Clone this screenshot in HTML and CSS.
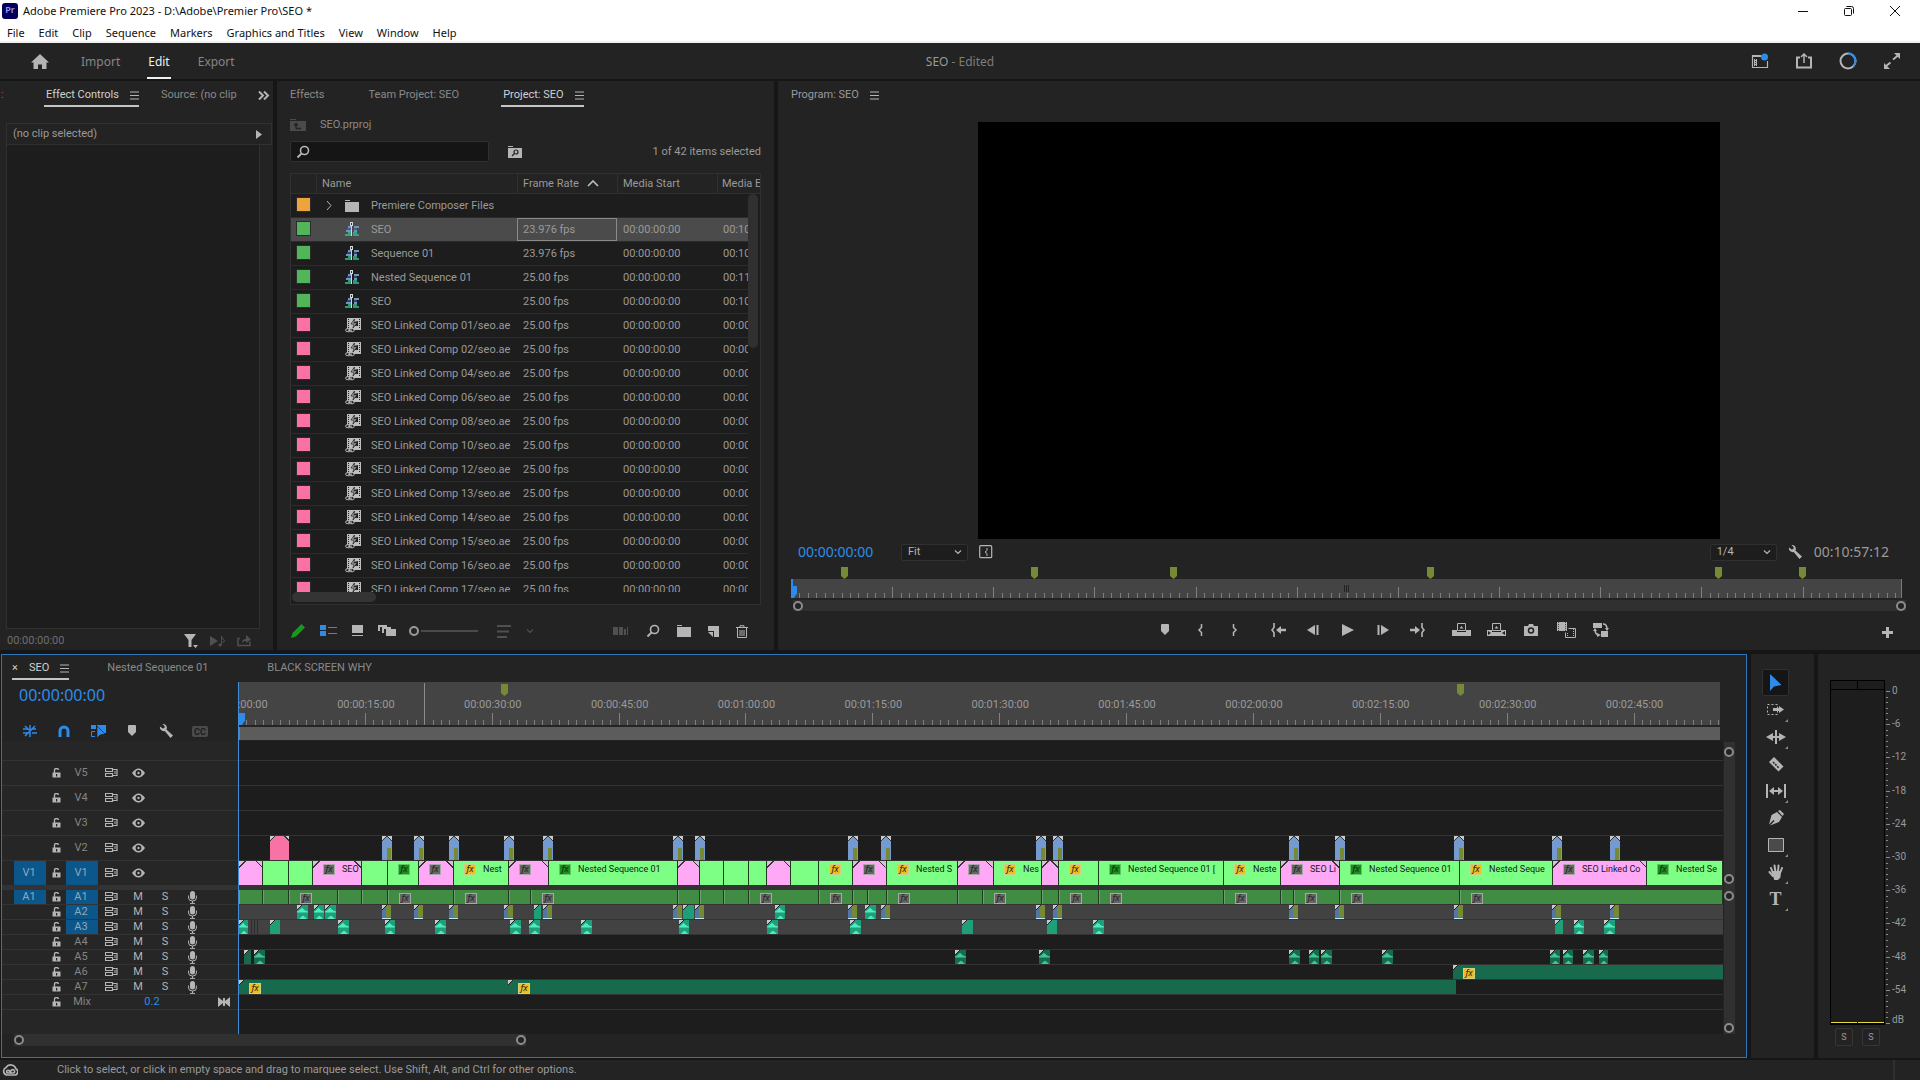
FILE: index.html
```html
<!doctype html>
<html lang="en">
<head>
  <meta charset="UTF-8">
  <meta name="viewport" content="width=device-width, initial-scale=1">
  <title>Adobe Premiere Pro 2023</title>
  <link rel="stylesheet" href="styles.css">
</head>
<body>
<svg class="sprite" aria-hidden="true">
  <symbol id="i-menu" viewBox="0 0 9 9"><path d="M0 1h9M0 4.500h9M0 8h9" stroke="currentColor"/></symbol>
  <symbol id="i-chevron" viewBox="0 0 8 8"><path d="M1 2.500l3 3 3-3" fill="none" stroke="currentColor" stroke-width="1.200"/></symbol>
  <symbol id="i-search" viewBox="0 0 14 14"><circle cx="8.500" cy="5.500" r="4" fill="none" stroke="currentColor" stroke-width="1.600"/><path d="M5.600 8.400L1.500 12.500" stroke="currentColor" stroke-width="2"/></symbol>
  <symbol id="i-folder" viewBox="0 0 14 12"><path d="M0 0h5v1H0zM0 2h14v10H0z" fill="currentColor"/></symbol>
  <symbol id="i-folder-up" viewBox="0 0 16 12"><path d="M0 0h6v1H0zM0 2h16v10H0z" fill="currentColor"/><path d="M6 9.500V5M4 6.500L6 4.500l2 2M6 9.500h5" fill="none" stroke="#232323" stroke-width="1.300"/></symbol>
  <symbol id="i-folder-search" viewBox="0 0 14 12"><path d="M0 0h5v1H0zM0 2h14v10H0z" fill="currentColor"/><circle cx="8" cy="6" r="2" fill="none" stroke="#232323" stroke-width="1.200"/><path d="M6.500 7.500L4 10" stroke="#232323" stroke-width="1.300"/></symbol>
  <symbol id="i-sequence" viewBox="0 0 15 15"><path d="M3 5h4M9 5h5M1 9h6M9 9h3" stroke="#6f94c4" stroke-width="2"/><path d="M2 7h5M9 7h3" stroke="#4f6fa0"/><path d="M0 13h6M8 13h6M3 11h4M8 11h4" stroke="#37c097" stroke-width="1.600"/><path d="M6 4h1v10H6z" fill="#d5d5d5"/><path d="M5 0h3v4H5z" fill="#d5d5d5"/><path d="M6 1h1v2H6z" fill="#333"/></symbol>
  <symbol id="i-comp" viewBox="0 0 17 15"><path d="M2 0h14v12H2z" fill="#bdbdbd"/><path d="M3.500 1v10M14.500 1v10" stroke="#222" stroke-dasharray="1 1"/><path d="M9 4l4-1v5H9z" fill="#222"/><path d="M9.500 1L6 6h3l-1 4 4-5H9z" fill="#bdbdbd" stroke="#222" stroke-width=".8"/><rect x=".7" y="10.700" width="5" height="3" rx="1.500" fill="#1d1d1d" stroke="#bdbdbd"/><rect x="4.200" y="10.700" width="5" height="3" rx="1.500" fill="#1d1d1d" stroke="#bdbdbd"/><path d="M3 12.200h4" stroke="#bdbdbd"/></symbol>
  <symbol id="i-wrench" viewBox="0 0 14 14"><path d="M3.500 0l2.200 2.200-.3 1.700-1.700.6L1 2.500A3.800 3.800 0 0 0 5.700 7l5.800 7 2.500-2.500-6.600-6A3.800 3.800 0 0 0 3.500 0z" fill="currentColor"/></symbol>
  <symbol id="i-marker" viewBox="0 0 10 12"><path d="M1 1q0-1 1-1h6q1 0 1 1v6l-4 4-4-4z" fill="currentColor"/></symbol>
  <symbol id="i-in" viewBox="0 0 6 14"><path d="M4.500 1v3.500L2 7l2.500 2.500V13" fill="none" stroke="currentColor" stroke-width="1.500"/></symbol>
  <symbol id="i-out" viewBox="0 0 6 14"><path d="M1.500 1v3.500L4 7 1.500 9.500V13" fill="none" stroke="currentColor" stroke-width="1.500"/></symbol>
  <symbol id="i-goto-in" viewBox="0 0 16 14"><path d="M4 0v4.500L2 7l2 2.500V14" fill="none" stroke="currentColor" stroke-width="1.600"/><path d="M6 7l5-4v2.800h5v2.400h-5V11z" fill="currentColor"/></symbol>
  <symbol id="i-goto-out" viewBox="0 0 16 14"><path d="M12 0v4.500L14 7l-2 2.500V14" fill="none" stroke="currentColor" stroke-width="1.600"/><path d="M10 7L5 3v2.800H0v2.400h5V11z" fill="currentColor"/></symbol>
  <symbol id="i-back" viewBox="0 0 14 12"><path d="M1 6l8-5v10zM10.500 1h2v10h-2z" fill="currentColor"/></symbol>
  <symbol id="i-step" viewBox="0 0 14 12"><path d="M13 6L5 1v10zM1.500 1h2v10h-2z" fill="currentColor"/></symbol>
  <symbol id="i-play" viewBox="0 0 12 12"><path d="M0 0l12 6-12 6z" fill="currentColor"/></symbol>
  <symbol id="i-lift" viewBox="0 0 19 14"><path d="M0 7h5v6H0zM5 9h9v4H5zM14 7h5v6h-5z" fill="currentColor"/><path d="M5.500 7.500v-7h8v7z" fill="none" stroke="currentColor"/><path d="M9.500 3l2 2.500h-4z" fill="currentColor"/></symbol>
  <symbol id="i-extract" viewBox="0 0 19 14"><path d="M0 7h5v6H0zM5 9h9v4H5zM14 7h5v6h-5z" fill="currentColor"/><path d="M5.500 7.500v-7h8v7z" fill="none" stroke="currentColor"/><path d="M9.500 3l2 2.500h-4z" fill="currentColor"/><path d="M1 8l3 2-3 2zM18 8l-3 2 3 2z" fill="#232323"/></symbol>
  <symbol id="i-camera" viewBox="0 0 14 12"><path d="M0 2h4l1-2h4l1 2h4v10H0z" fill="currentColor"/><circle cx="7" cy="6.500" r="2.500" fill="none" stroke="#232323" stroke-width="1.500"/></symbol>
  <symbol id="i-compare" viewBox="0 0 19 16"><path d="M0 0h10v9H0z" fill="currentColor"/><path d="M1.500 0v9M8.500 0v9" stroke="#444" stroke-dasharray="1 1"/><path d="M8.500 10.500v5h10v-9h-7" fill="none" stroke="currentColor"/><path d="M10.500 11v4M16.500 7v8" stroke="currentColor" stroke-dasharray="1 1"/></symbol>
  <symbol id="i-proxy" viewBox="0 0 16 14"><path d="M0 0h9v5H0zM8 8h7v6H8z" fill="currentColor"/><path d="M10 1q4 0 4 5M2 6q0 6 4 6" fill="none" stroke="currentColor" stroke-width="1.500"/><path d="M12 5h4l-2 3zM4 10l4 2-4 2zM0 8l2-3 2 3z" fill="currentColor"/></symbol>
  <symbol id="i-lock" viewBox="0 0 9 10"><path d="M.5 4.500h8v5h-8z" fill="currentColor"/><path d="M2.500 5V2q0-1.500 2-1.500t2 1.500" fill="none" stroke="currentColor" stroke-width="1.300"/><path d="M4 6h1.200v2.500H4z" fill="#222"/></symbol>
  <symbol id="i-sync" viewBox="0 0 13 10"><path d="M.5.500h7v3h-7zM.5 5.500h7v3h-7zM8 1.500h4v6H8" fill="none" stroke="currentColor" stroke-width="1.200"/><path d="M10 3v3" stroke="currentColor"/></symbol>
  <symbol id="i-eye" viewBox="0 0 13 10"><path d="M0 5q6.500-9 13 0-6.500 9-13 0z" fill="currentColor"/><circle cx="6.500" cy="5" r="2.900" fill="#222"/><circle cx="6.500" cy="5" r="1.200" fill="currentColor"/></symbol>
  <symbol id="i-mic" viewBox="0 0 9 13"><rect x="2" y="0" width="5" height="8.500" rx="2.500" fill="currentColor"/><path d="M.6 4.500V7q0 3 3.900 3t3.900-3V4.500M4.500 10v2M2 12.400h5" fill="none" stroke="currentColor"/></symbol>
  <symbol id="i-keys" viewBox="0 0 12 10"><path d="M0 0l5 4V1h2v3l5-4v10L7 6v3H5V6l-5 4z" fill="currentColor"/></symbol>
</svg>

<header class="window-bar">
  <div class="title-row">
    <span class="pr-logo">Pr</span>
    <span class="window-title">Adobe Premiere Pro 2023 - D:\Adobe\Premier Pro\SEO *</span>
    <div class="window-buttons">
      <button aria-label="Minimize"><svg width="10" height="10"><path d="M0 5.500h10" stroke="#111"/></svg></button>
      <button aria-label="Restore"><svg width="10" height="10" fill="none" stroke="#111"><rect x=".5" y="2.500" width="7" height="7" rx="1"/><path d="M2.500.500h5q2 0 2 2v5"/></svg></button>
      <button aria-label="Close"><svg width="10" height="10"><path d="M0 0l10 10M10 0L0 10" stroke="#111"/></svg></button>
    </div>
  </div>
  <nav class="menu-bar">
    <a href="#">File</a><a href="#">Edit</a><a href="#">Clip</a><a href="#">Sequence</a><a href="#">Markers</a><a href="#">Graphics and Titles</a><a href="#">View</a><a href="#">Window</a><a href="#">Help</a>
  </nav>
</header>

<div class="app-bar">
  <div class="modes">
    <button class="home" aria-label="Home"><svg width="18" height="15"><path d="M9 0l9 8.500h-2.500V15h-4.500v-4.500H7V15H2.500V8.500H0z" fill="#b5b5b5"/></svg></button>
    <button class="mode">Import</button>
    <button class="mode active">Edit</button>
    <button class="mode">Export</button>
  </div>
  <div class="doc-name"><b>SEO</b> - Edited</div>
  <div class="app-actions">
    <button aria-label="Workspaces"><svg width="18" height="16"><path d="M10 2.500H1.500v12h15V8" fill="none" stroke="#b5b5b5" stroke-width="1.200"/><path d="M1 2h9v2H1zM3 6h3v7H3z" fill="#b5b5b5"/><path d="M4.500 6v7" stroke="#333" stroke-dasharray="1 1"/><circle cx="13.500" cy="4" r="3.500" fill="#2d8ceb"/></svg></button>
    <button aria-label="Quick export"><svg width="18" height="16"><path d="M5 4.500H2v10h14v-10h-3" fill="none" stroke="#b5b5b5" stroke-width="2"/><path d="M9 10V2M6 4l3-3 3 3" fill="none" stroke="#b5b5b5" stroke-width="1.500"/></svg></button>
    <button aria-label="Progress"><svg width="18" height="18"><circle cx="9" cy="9" r="7.500" fill="none" stroke="#b5b5b5" stroke-width="2"/><path d="M9 1.500a7.500 7.500 0 0 1 5 13" fill="none" stroke="#2d8ceb" stroke-width="2"/></svg></button>
    <button aria-label="Full screen"><svg width="18" height="16"><path d="M10 6.500l5-4M2.500 13.500l5-4" stroke="#b5b5b5" stroke-width="2"/><path d="M11 0h6v6zM1 16v-6l6 6z" fill="#b5b5b5"/></svg></button>
  </div>
</div>

<main class="workspace">
  <div class="row-top">
    <section class="panel effect-controls">
      <div class="tabs">
        <span class="tab-cut">:</span>
        <button class="tab active">Effect Controls <svg class="menu-icon"><use href="#i-menu"/></svg></button>
        <button class="tab source-tab">Source: (no clip</button>
        <button class="more" aria-label="More panels"><svg width="12" height="9"><path d="M1 .5l4 4-4 4M6 .5l4 4-4 4" fill="none" stroke="#b5b5b5" stroke-width="2"/></svg></button>
      </div>
      <div class="fx-head"><span>(no clip selected)</span><svg width="6" height="9"><path d="M0 0l6 4.500L0 9z" fill="#b5b5b5"/></svg></div>
      <div class="fx-body"></div>
      <div class="fx-foot">
        <span>00:00:00:00</span>
        <button aria-label="Filter"><svg width="14" height="14"><path d="M0 0h12L7.500 6v7h-3V6zM9 11h5l-2.500 3z" fill="#b5b5b5"/></svg></button>
        <button aria-label="Play audio"><svg width="15" height="12"><path d="M0 1l8 5-8 5z" fill="#505050"/><circle cx="10" cy="10" r="1.500" fill="#505050"/><path d="M11.500 10V1q0 3 3 4l-1 3" fill="none" stroke="#505050"/></svg></button>
        <button aria-label="Export"><svg width="15" height="12"><path d="M3 3.500H1v7h12v-4" fill="none" stroke="#505050" stroke-width="1.500"/><path d="M5 8q0-4 4-4V0l5 4.500L9 8V6Q6 6 5 8z" fill="#505050"/></svg></button>
      </div>
    </section>

    <section class="panel project">
      <div class="tabs">
        <button class="tab">Effects</button>
        <button class="tab">Team Project: SEO</button>
        <button class="tab active">Project: SEO <svg class="menu-icon"><use href="#i-menu"/></svg></button>
      </div>
      <div class="project-path"><svg width="16" height="12"><use href="#i-folder-up"/></svg><span>SEO.prproj</span></div>
      <div class="project-search">
        <label class="search-box"><svg width="14" height="14"><use href="#i-search"/></svg><input type="text" aria-label="Search project"></label>
        <button aria-label="Create search bin"><svg width="14" height="12"><use href="#i-folder-search"/></svg></button>
        <span class="count">1 of 42 items selected</span>
      </div>
      <div class="bin">
        <table>
          <colgroup><col class="c-label"><col class="c-name"><col class="c-rate"><col class="c-start"><col class="c-end"></colgroup>
          <thead><tr><th></th><th>Name</th><th>Frame Rate <svg width="12" height="7"><path d="M1 6l5-5 5 5" fill="none" stroke="#c0c0c0" stroke-width="1.600"/></svg></th><th>Media Start</th><th>Media E</th></tr></thead>
          <tbody id="binRows"></tbody>
        </table>
        <div class="bin-vscroll"></div>
        <div class="bin-hscroll"></div>
      </div>
      <div class="project-tools">
        <button aria-label="Writable"><svg width="14" height="14"><path d="M0 14l1.500-5L9.500 1l1-1L14 3.500 5 12.500z" fill="#189a18"/></svg></button>
        <button aria-label="List view"><svg width="17" height="12"><path d="M0 0h6v5H0zM0 6h6v5H0zM8 2h9v1H8zM8 8h9v1H8z" fill="#2d8ceb"/></svg></button>
        <button aria-label="Icon view"><svg width="11" height="12"><path d="M0 0h11v8H0zM0 10h11v1H0z" fill="#b5b5b5"/></svg></button>
        <button aria-label="Freeform view"><svg width="19" height="12"><path d="M0 0h9v2H2v4H0zM4 2h9v2H6v4H4zM8 4h10v7H8z" fill="#b5b5b5"/></svg></button>
        <input class="zoom-slider" type="range" value="0" aria-label="Thumbnail size">
        <button aria-label="Sort"><svg width="14" height="13"><path d="M0 1h14M0 6.500h12M0 12h10" stroke="#505050" stroke-width="2"/></svg></button>
        <button aria-label="Sort options"><svg width="8" height="8" color="#505050"><use href="#i-chevron"/></svg></button>
        <div class="project-actions">
          <button aria-label="Automate to sequence"><svg width="16" height="8"><path d="M0 0h5v8H0zM6 0h4v8H6zM11 2h2v6h-2zM14 0h1v8h-1z" fill="#505050"/></svg></button>
          <button aria-label="Find"><svg width="14" height="14"><use href="#i-search"/></svg></button>
          <button aria-label="New bin"><svg width="14" height="12"><use href="#i-folder"/></svg></button>
          <button aria-label="New item"><svg width="11" height="11"><path d="M0 0h11v11H6V5H0z" fill="#b5b5b5"/><path d="M0 6h5v5z" fill="#b5b5b5"/></svg></button>
          <button aria-label="Clear"><svg width="12" height="13"><path d="M0 2.500h12M4 2V.7h4V2M1.500 3v9.500h9V3M4 5v6M6 5v6M8 5v6" fill="none" stroke="#b5b5b5"/></svg></button>
        </div>
      </div>
    </section>

    <section class="panel program">
      <div class="tabs">
        <span class="tab plain">Program: SEO <svg class="menu-icon"><use href="#i-menu"/></svg></span>
      </div>
      <div class="screen-wrap"><div class="screen"></div></div>
      <div class="program-info">
        <span class="timecode">00:00:00:00</span>
        <span class="select"><select aria-label="Zoom level"><option>Fit</option></select><svg width="8" height="8"><use href="#i-chevron"/></svg></span>
        <button aria-label="In point display"><svg width="14" height="14"><rect x=".7" y=".7" width="12" height="12" rx="1" fill="none" stroke="#b5b5b5" stroke-width="1.200"/><path d="M8 3v2.500L6 7l2 1.500V11" fill="none" stroke="#b5b5b5"/></svg></button>
        <span class="spacer"></span>
        <span class="select"><select aria-label="Playback resolution"><option>1/4</option></select><svg width="8" height="8"><use href="#i-chevron"/></svg></span>
        <button aria-label="Settings"><svg width="14" height="14"><use href="#i-wrench"/></svg></button>
        <span class="duration">00:10:57:12</span>
      </div>
      <div class="program-ruler" id="programRuler"></div>
      <div class="program-scroll"><i class="knob"></i><i class="knob"></i></div>
      <div class="transport">
        <span></span>
        <div class="transport-buttons">
          <button aria-label="Add marker"><svg width="10" height="12"><use href="#i-marker"/></svg></button>
          <button aria-label="Mark in"><svg width="6" height="14"><use href="#i-in"/></svg></button>
          <button aria-label="Mark out"><svg width="6" height="14"><use href="#i-out"/></svg></button>
          <button class="group-start" aria-label="Go to in"><svg width="16" height="14"><use href="#i-goto-in"/></svg></button>
          <button aria-label="Step back"><svg width="14" height="12"><use href="#i-back"/></svg></button>
          <button aria-label="Play"><svg width="12" height="12"><use href="#i-play"/></svg></button>
          <button aria-label="Step forward"><svg width="14" height="12"><use href="#i-step"/></svg></button>
          <button aria-label="Go to out"><svg width="16" height="14"><use href="#i-goto-out"/></svg></button>
          <button class="group-start" aria-label="Lift"><svg width="19" height="14"><use href="#i-lift"/></svg></button>
          <button aria-label="Extract"><svg width="19" height="14"><use href="#i-extract"/></svg></button>
          <button aria-label="Export frame"><svg width="14" height="12"><use href="#i-camera"/></svg></button>
          <button aria-label="Comparison view"><svg width="19" height="16"><use href="#i-compare"/></svg></button>
          <button aria-label="Toggle proxies"><svg width="16" height="14"><use href="#i-proxy"/></svg></button>
        </div>
        <button class="add-button" aria-label="Button editor"><svg width="11" height="11"><path d="M4 0h3v4h4v3H7v4H4V7H0V4h4z" fill="#b5b5b5"/></svg></button>
      </div>
    </section>
  </div>

  <div class="row-bottom">
    <section class="panel timeline">
      <div class="tabs">
        <button class="tab active"><i class="close-x">×</i> SEO <svg class="menu-icon"><use href="#i-menu"/></svg></button>
        <button class="tab">Nested Sequence 01</button>
        <button class="tab">BLACK SCREEN WHY</button>
      </div>
      <div class="timeline-main">
        <div class="timeline-work">
          <div class="timeline-top">
            <div class="timeline-controls">
              <span class="timecode big">00:00:00:00</span>
              <div class="timeline-tools">
                <button aria-label="Insert as nest"><svg width="14" height="14" stroke="#2d8ceb" stroke-width="1.500"><path d="M7 1v12M0 5h5M9 5h4M0 9h5M9 9h5M2 12l10-10M2 2l4 4"/></svg></button>
                <button aria-label="Snap"><svg width="12" height="12"><path d="M2 12V6a4 4 0 0 1 8 0v6" fill="none" stroke="#2d8ceb" stroke-width="3"/></svg></button>
                <button aria-label="Linked selection"><svg width="15" height="14"><path d="M0 1h5v4H0zM6 1h9v8H6z" fill="#2d8ceb"/><path d="M4 7.500H.5v5H4" fill="none" stroke="#2d8ceb"/><path d="M6 2v12l3-3 5-1z" fill="#2d8ceb" stroke="#232323" stroke-width=".7"/></svg></button>
                <button aria-label="Add marker"><svg width="10" height="12"><use href="#i-marker"/></svg></button>
                <button aria-label="Display settings"><svg width="14" height="14"><use href="#i-wrench"/></svg></button>
                <button class="cc" aria-label="Captions">CC</button>
              </div>
            </div>
            <div class="ruler-col">
              <div class="ruler" id="ruler"></div>
              <div class="work-area"></div>
            </div>
          </div>
          <div class="tracks" id="tracks"></div>
          <div class="playhead"></div>
        </div>
        <div class="vscrolls">
          <div class="vscroll video"><i class="knob"></i><i class="knob"></i></div>
          <div class="vscroll"><i class="knob"></i><i class="knob"></i></div>
        </div>
      </div>
      <div class="timeline-hscroll"><i class="knob"></i><i class="knob"></i></div>
    </section>

    <section class="panel tools">
      <button class="tool active" aria-label="Selection"><svg width="14" height="18"><path d="M1 0v17l4-4.500 7.500-1.500z" fill="#2d8ceb"/></svg></button>
      <button class="tool more-tools" aria-label="Track select"><svg width="18" height="12"><path d="M.5.500h10v10H.5z" fill="none" stroke="#b5b5b5" stroke-dasharray="2 2"/><path d="M6 4h6V2l5 3.500L12 9V7H6z" fill="#b5b5b5"/></svg></button>
      <button class="tool more-tools" aria-label="Ripple edit"><svg width="20" height="14"><path d="M0 7l7-4v3h2V0h2v6h2V3l7 4-7 4V8h-2v6H9V8H7v3z" fill="#b5b5b5"/></svg></button>
      <button class="tool" aria-label="Razor"><svg width="16" height="16"><path d="M6 1l9.500 9.500-5 5L1 6z" fill="#b5b5b5"/><path d="M5 6l6 6" stroke="#232323" stroke-width="1.500" stroke-dasharray="2 1"/></svg></button>
      <button class="tool more-tools" aria-label="Slip"><svg width="20" height="14"><path d="M0 0h2v14H0zM18 0h2v14h-2zM3 7l5-4v3h4V3l5 4-5 4V8H8v3z" fill="#b5b5b5"/></svg></button>
      <button class="tool" aria-label="Pen"><svg width="16" height="16"><path d="M10 1l2-1 4 4-1.500 2zM9 2l5 5-3 5-9 3.500 4.500-4.500-1-1L1 14.500 3.500 5z" fill="#b5b5b5"/></svg></button>
      <button class="tool more-tools" aria-label="Rectangle"><svg width="16" height="14"><path d="M.5.500h15v13H.5z" fill="#4a4a4a" stroke="#b5b5b5"/></svg></button>
      <button class="tool more-tools" aria-label="Hand"><svg width="16" height="16" stroke="#b5b5b5" stroke-linecap="round" stroke-width="2"><path d="M5 9L3 4M7.500 8L6.500 1.500M10 8l.5-6.500M12 9l2-5M5 12L1.500 8"/><path d="M5 8h7l-.5 5-2 2H7z" fill="#b5b5b5"/></svg></button>
      <button class="tool more-tools type-tool" aria-label="Type">T</button>
    </section>

    <section class="panel meters">
      <div class="meter-row">
        <div class="meter">
          <div class="clip-lights"><i></i><i></i></div>
          <div class="bars"><i></i><i></i></div>
        </div>
        <div class="meter-scale" id="meterScale"></div>
      </div>
      <div class="solo"><button>S</button><button>S</button></div>
    </section>
  </div>
</main>

<footer class="status">
  <svg width="16" height="14" fill="none" stroke="#b5b5b5" stroke-width="1.600"><path d="M4.500 12a4 4 0 0 1-.5-7.500A5.500 5.500 0 0 1 14 6a3.200 3.200 0 0 1-2 6z"/><path d="M9 9.500Q7 7 5.500 7.500T5 10h6q2 0 1.500-2T9.500 7L8 9"/></svg>
  <span class="status-text">Click to select, or click in empty space and drag to marquee select. Use Shift, Alt, and Ctrl for other options.</span>
  <span class="status-end"></span>
</footer>
<script src="app.js"></script>
</body>
</html>
```
FILE: styles.css
```css
:root {
  --bg: #232323;
  --dark: #1d1d1d;
  --gap: #161616;
  --line: #303030;
  --text: #9a9a9a;
  --bright: #d0d0d0;
  --icon: #b5b5b5;
  --blue: #2d8ceb;
  --olive: #768a36;
}
* {
  box-sizing: border-box;
}
body {
  margin: 0;
  height: 100vh;
  display: flex;
  flex-direction: column;
  overflow: hidden;
  background: var(--gap);
  color: var(--text);
  font: 11px/14px Roboto, "Noto Sans", sans-serif;
}
button {
  display: inline-flex;
  align-items: center;
  justify-content: center;
  padding: 0;
  border: 0;
  background: none;
  color: inherit;
  font: inherit;
  white-space: nowrap;
}
svg {
  display: block;
  flex: none;
}
i {
  font-style: normal;
}
.sprite {
  position: absolute;
  width: 0;
  height: 0;
}
.spacer {
  flex: 1;
}

/* window chrome */
.window-bar {
  background: #fff;
  color: #111;
  border-bottom: 2px solid #f0f0f0;
  font-family: "Noto Sans", sans-serif;
}
.title-row {
  display: flex;
  align-items: center;
  height: 22px;
  padding-left: 2px;
}
.pr-logo {
  width: 16px;
  height: 16px;
  border-radius: 3px;
  background: #00005b;
  color: #9999ff;
  font-size: 9px;
  font-weight: 600;
  text-align: center;
}
.window-title {
  margin-left: 5px;
}
.window-buttons {
  display: flex;
  gap: 36px;
  margin-left: auto;
  padding-right: 20px;
}
.menu-bar {
  display: flex;
  gap: 14px;
  height: 19px;
  padding: 4px 7px 0;
}
.menu-bar a {
  color: inherit;
  text-decoration: none;
}

/* app bar */
.app-bar {
  display: grid;
  grid-template-columns: 1fr auto 1fr;
  align-items: center;
  height: 36px;
  background: var(--bg);
  font: 12px/16px "Noto Sans", sans-serif;
}
.modes {
  display: flex;
  align-self: stretch;
  gap: 26px;
  padding-left: 31px;
}
.home {
  margin-right: 5px;
}
.mode {
  padding: 3px 1px 0;
  border-bottom: 2px solid transparent;
  color: #868686;
}
.mode.active {
  color: #f0f0f0;
  border-color: #f0f0f0;
}
.doc-name {
  padding-top: 2px;
  color: #7d7d7d;
}
.doc-name b {
  color: var(--text);
  font-weight: 400;
}
.app-actions {
  display: flex;
  gap: 26px;
  justify-content: flex-end;
  padding-right: 19px;
}

/* panels */
.workspace {
  flex: 1;
  min-height: 0;
  display: grid;
  grid-template-rows: minmax(0, 569fr) minmax(0, 404fr);
  gap: 4px;
  padding: 2px 0;
}
.row-top {
  display: grid;
  grid-template-columns: 273px 497px minmax(0, 1fr);
  gap: 4px;
  min-height: 0;
}
.row-bottom {
  display: grid;
  grid-template-columns: minmax(0, 1fr) 63px 102px;
  gap: 4px;
  min-height: 0;
  padding-left: 1px;
}
.panel {
  display: flex;
  flex-direction: column;
  min-width: 0;
  min-height: 0;
  background: var(--bg);
}
.tabs {
  display: flex;
  align-items: flex-start;
  height: 41px;
  padding-top: 4px;
}
.tab {
  display: inline-flex;
  align-items: center;
  height: 22px;
  padding: 0 2px;
  border-bottom: 2px solid transparent;
  color: #8a8a8a;
}
.tab.active {
  color: var(--bright);
  border-color: #c4c4c4;
}
.tab.active .menu-icon {
  margin-right: -2px;
}
.menu-icon {
  width: 9px;
  height: 9px;
  margin-left: 11px;
  color: var(--icon);
}

/* effect controls */
.effect-controls .tabs {
  height: 42px;
}
.tab-cut {
  width: 44px;
  padding: 3px 0 0 1px;
  color: #a05050;
}
.source-tab {
  margin-left: 20px;
}
.more {
  height: 18px;
  margin: 1px 3px 0 auto;
}
.fx-head {
  display: flex;
  align-items: center;
  justify-content: space-between;
  height: 22px;
  margin: 0 1px 0 6px;
  padding: 0 9px 0 6px;
  border: 1px solid var(--line);
}
.fx-body {
  flex: 1;
  margin: 0 13px 0 6px;
  border: 1px solid var(--line);
  border-top: 0;
  background: var(--dark);
}
.fx-foot {
  display: flex;
  align-items: center;
  gap: 12px;
  height: 21px;
  padding: 2px 21px 0 7px;
  color: #6e6e6e;
}
.fx-foot span {
  margin-right: auto;
}

/* project */
.project {
  padding: 0 13px;
}
.project .tabs {
  gap: 40px;
  height: 35px;
}
.project .tab:first-child {
  padding-left: 0;
}
.project-path {
  display: flex;
  align-items: center;
  gap: 14px;
  height: 18px;
  margin-bottom: 7px;
  color: #8a8a8a;
}
.project-path svg {
  color: #4a4a4a;
}
.project-search {
  display: flex;
  align-items: center;
  height: 21px;
  margin-bottom: 11px;
}
.search-box {
  display: flex;
  align-items: center;
  width: 199px;
  height: 21px;
  margin-right: 19px;
  padding: 0 5px;
  border: 1px solid var(--line);
  border-radius: 2px;
  background: #151515;
}
.search-box input {
  flex: 1;
  min-width: 0;
  border: 0;
  background: none;
  color: var(--bright);
}
.search-box svg,
.project-search button,
.project-tools {
  color: var(--icon);
}
.count {
  margin-left: auto;
}
.bin {
  position: relative;
  flex: 1;
  min-height: 0;
  overflow: hidden;
  border: 1px solid var(--line);
  background: var(--dark);
}
.bin table {
  width: 100%;
  border-collapse: separate;
  border-spacing: 0;
  table-layout: fixed;
}
.c-label { width: 25px; }
.c-name { width: 201px; }
.c-rate { width: 100px; }
.c-start { width: 100px; }
.bin th {
  height: 20px;
  padding: 0 0 0 5px;
  border-left: 1px solid var(--line);
  border-bottom: 1px solid var(--line);
  background: var(--bg);
  font-weight: 400;
  text-align: left;
  white-space: nowrap;
  overflow: hidden;
}
.bin th:last-child {
  padding-left: 4px;
}
.bin th:first-child {
  border-left: 0;
}
.bin th svg {
  display: inline-block;
  margin-left: 5px;
}
.bin td {
  height: 24px;
  padding: 0 0 0 6px;
  border-bottom: 1px solid #2b2b2b;
  white-space: nowrap;
  overflow: hidden;
}
.bin td:nth-child(2) {
  padding: 0;
}
.bin td:first-child {
  padding: 0 0 2px 5px;
}
.bin tr.selected td {
  background: #4b4b4b;
}
.bin tr.selected td:nth-child(3) {
  box-shadow: inset 0 0 0 1px #8a8a8a;
}
.swatch {
  display: block;
  width: 15px;
  height: 15px;
  border: 1px solid #2b2b2b;
}
.swatch.orange { background: #eda43c; }
.swatch.green { background: #52b558; }
.swatch.pink { background: #f972a6; }
.item-name {
  display: grid;
  grid-template-columns: 29px 26px auto;
  align-items: center;
}
.item-name .twirl {
  margin-left: 11px;
}
.bin-vscroll {
  position: absolute;
  top: 20px;
  right: 0;
  bottom: 0;
  width: 12px;
  background: var(--dark);
}
.bin-vscroll::before {
  content: "";
  display: block;
  width: 10px;
  height: 154px;
  border-radius: 5px;
  background: var(--line);
}
.bin-hscroll {
  position: absolute;
  left: 0;
  right: 0;
  bottom: 0;
  height: 12px;
  background: var(--dark);
}
.bin-hscroll::before {
  content: "";
  display: block;
  width: 84px;
  height: 10px;
  margin-left: 1px;
  border-radius: 5px;
  background: #343434;
}
.project-tools {
  display: flex;
  align-items: center;
  gap: 15px;
  height: 45px;
  padding: 7px 13px 0 1px;
}
.project-actions {
  display: flex;
  align-items: center;
  gap: 17px;
  margin-left: auto;
}
.zoom-slider {
  appearance: none;
  width: 69px;
  height: 10px;
  margin: 0 4px 0 -3px;
  background: linear-gradient(#4a4a4a, #4a4a4a) right / 57px 2px no-repeat;
}
.zoom-slider::-webkit-slider-thumb {
  appearance: none;
  width: 10px;
  height: 10px;
  border: 2px solid #9a9a9a;
  border-radius: 50%;
  background: var(--bg);
}

/* program monitor */
.program .tabs {
  padding-left: 11px;
}
.tab.plain {
  color: var(--text);
}
.screen-wrap {
  flex: 1;
  min-height: 0;
  display: flex;
  justify-content: center;
}
.screen {
  height: 100%;
  aspect-ratio: 16 / 9;
  background: #000;
}
.program-info {
  display: flex;
  align-items: center;
  height: 28px;
  padding: 0 31px 2px 20px;
}
.timecode {
  width: 103px;
  color: var(--blue);
  font-family: "Noto Sans", sans-serif;
  font-size: 14px;
}
.timecode.big {
  width: auto;
  font-size: 16px;
  line-height: 20px;
}
.select {
  display: flex;
  align-items: center;
  margin-right: 11px;
  color: var(--icon);
}
.select select {
  appearance: none;
  width: 67px;
  height: 17px;
  padding: 0 6px;
  border: 1px solid var(--line);
  border-radius: 2px;
  background: var(--dark);
  color: inherit;
  font: inherit;
}
.select svg {
  margin-left: -14px;
  margin-right: 6px;
  pointer-events: none;
}
.duration {
  margin-left: 12px;
  font-family: "Noto Sans", sans-serif;
  font-size: 14px;
}
.program-info button {
  color: var(--icon);
}
.program-ruler {
  position: relative;
  height: 19px;
  margin: 12px 18px 2px 13px;
  border-left: 2px solid var(--blue);
  border-right: 1px solid var(--blue);
  background: #444;
}
.tick {
  position: absolute;
  bottom: 0;
  width: 1px;
  height: 5px;
  background: #808080;
}
.tick.major {
  height: 11px;
}
.mark {
  position: absolute;
  width: 7px;
  height: 12px;
  margin-left: -3px;
  background: var(--olive);
  clip-path: polygon(0 0, 100% 0, 100% 75%, 50% 100%, 0 75%);
}
.program-ruler .mark {
  top: -12px;
}
.head-grip {
  position: absolute;
  left: -2px;
  bottom: 0;
  width: 6px;
  height: 12px;
  background: var(--blue);
  clip-path: polygon(0 0, 100% 0, 100% 60%, 50% 100%, 0 100%);
}
.grip {
  position: absolute;
  left: 50%;
  top: 6px;
  width: 5px;
  height: 7px;
  margin-left: -3px;
  background: repeating-linear-gradient(90deg, #222 0 1px, transparent 1px 2px);
}
.program-scroll {
  display: flex;
  justify-content: space-between;
  align-items: center;
  height: 11px;
  margin: 0 14px 0 15px;
  background: var(--line);
}
.knob {
  width: 10px;
  height: 10px;
  border: 2px solid #8c8c8c;
  border-radius: 50%;
  background: var(--bg);
}
.transport {
  display: grid;
  grid-template-columns: 1fr auto 1fr;
  align-items: center;
  height: 39px;
  padding-bottom: 2px;
  color: var(--icon);
}
.transport-buttons {
  display: flex;
  padding-left: 68px;
}
.transport-buttons button {
  width: 35px;
}
.transport-buttons .group-start {
  margin-left: 8px;
}
.add-button {
  justify-self: end;
  margin: 5px 27px 0 0;
}

/* timeline */
.timeline {
  border: 1px solid #2f76b8;
}
.timeline .tabs {
  height: 27px;
  padding: 3px 0 0 10px;
}
.timeline .tab {
  margin-right: 55px;
}
.timeline .tab:first-child {
  margin-right: 36px;
  padding-left: 0;
}
.close-x {
  width: 17px;
  text-align: left;
}
.timeline-main {
  flex: 1;
  min-height: 0;
  display: grid;
  grid-template-columns: minmax(0, 1fr) 23px;
}
.timeline-work {
  position: relative;
  display: flex;
  flex-direction: column;
  overflow: hidden;
  background: var(--dark);
}
.timeline-top {
  display: flex;
  height: 59px;
  background: var(--bg);
}
.timeline-controls {
  width: 237px;
  padding: 3px 0 0 17px;
}
.timeline-tools {
  display: flex;
  margin: 18px 0 0 -6px;
  color: var(--icon);
}
.timeline-tools button {
  width: 34px;
  height: 16px;
}
.timeline-tools .cc {
  width: 16px;
  height: 11px;
  margin: 3px 9px 0;
  border-radius: 2px;
  background: #4a4a4a;
  color: #1d1d1d;
  font-size: 9px;
  font-weight: 700;
}
.ruler-col {
  flex: 1;
  min-width: 0;
  margin-right: 3px;
}
.ruler {
  position: relative;
  height: 43px;
  margin-bottom: 2px;
  overflow: hidden;
  background: #444;
}
.ruler .tick.major {
  height: 12px;
}
.ruler .head-grip {
  left: 0;
}
.ruler-label {
  position: absolute;
  top: 16px;
  width: 80px;
  margin-left: -40px;
  text-align: center;
}
.ruler .mark {
  top: 2px;
}
.hover-line {
  position: absolute;
  top: 1px;
  bottom: 1px;
  width: 1px;
  background: #8c8c8c;
}
.work-area {
  height: 13px;
  background: #5c5c5c;
  border-left: 1px solid var(--blue);
}
.tracks {
  flex: 1;
  padding-top: 19px;
  background: linear-gradient(90deg, #262626 237px, var(--dark) 237px);
}
.track {
  display: flex;
  height: 15px;
  border-bottom: 1px solid #333;
}
.track.video {
  height: 25px;
  border-top: 1px solid #333;
  border-bottom: 0;
}
.track.first-audio {
  height: 20px;
  border-top: 5px solid #333;
}
.track-head {
  display: grid;
  grid-template-columns: 32px 20px 32px 27px 26px 28px 26px 1fr;
  align-items: center;
  justify-items: center;
  width: 237px;
  padding-left: 12px;
  color: var(--icon);
}
.patch {
  align-self: stretch;
  justify-self: stretch;
  padding-right: 2px;
  color: #858585;
}
.patch.on {
  background: #0b568a;
  color: #8fa9bb;
}
.mix-name {
  color: #858585;
}
.mix-value {
  grid-column: 5 / span 2;
  color: var(--blue);
}
.mix-keys {
  grid-column: 8;
  justify-self: end;
  margin-right: 9px;
}
.lane {
  position: relative;
  flex: 1;
  min-width: 0;
  overflow: hidden;
}
.lane.targeted {
  background: #424242;
}
.clip {
  position: absolute;
  top: 0;
  bottom: 0;
  overflow: hidden;
  border-right: 1px solid #1f3a1f;
  white-space: nowrap;
}
.clip.nest { background: #7dff85; }
.clip.comp {
  background: linear-gradient(135deg, #d8bfd5 4px, #333 4px 5px, transparent 5px) left / 50% 100% no-repeat,
    linear-gradient(225deg, #d8bfd5 4px, #333 4px 5px, transparent 5px) right / 50% 100% no-repeat,
    #fea8f6;
}
.clip.linked {
  border-right: 0;
  background: linear-gradient(135deg, #c9c9c9 3px, #333 3px 4px, transparent 4px) left / 50% 100% no-repeat,
    linear-gradient(225deg, #c9c9c9 3px, #333 3px 4px, transparent 4px) right / 50% 100% no-repeat,
    #f972a6;
}
.clip.title {
  border-right: 0;
  background: linear-gradient(135deg, #c9c9c9 3px, #333 3px 4px, transparent 4px) left / 50% 100% no-repeat,
    linear-gradient(225deg, #c9c9c9 3px, #333 3px 4px, transparent 4px) right / 50% 100% no-repeat,
    linear-gradient(var(--olive), var(--olive)) 5px 100% / 4px 12px no-repeat,
    #759ad0;
}
.clip.nest-audio {
  background: #3f8c42;
  border-left: 1px solid #6f9f70;
}
.clip.music,
.clip.sfx,
.clip.sfx-dark {
  border-right: 0;
  background: linear-gradient(135deg, #c9c9c9 3px, #222 3px 4px, transparent 4px), #176b4c;
}
.clip.sfx {
  background: linear-gradient(135deg, #c9c9c9 3px, #222 3px 4px, transparent 4px), #1f9f77;
}
.clip.title-audio {
  border-right: 0;
  border-bottom: 1px solid #bfe4ff;
  background: linear-gradient(135deg, #c9c9c9 3px, #222 3px 4px, transparent 4px),
    linear-gradient(var(--olive), var(--olive)) 4px 0 / 5px 12px no-repeat,
    #5277a5;
}
.clip.sliver {
  border-right: 0;
  background: #2c2c2c;
}
.clip svg {
  width: 100%;
  height: 100%;
}
.wave { fill: #4fecc4; }
.sfx-dark .wave { fill: #3cc795; }
.clip-name {
  position: absolute;
  left: 29px;
  top: 2px;
  color: #142014;
  font-size: 9px;
  line-height: 13px;
}
.fx {
  position: absolute;
  left: 10px;
  top: 3px;
  width: 12px;
  height: 11px;
  border: 1px solid #a8a8a8;
  background: #666;
  color: #222;
  font: italic 9px/8px "Noto Sans", sans-serif;
  text-align: center;
}
.fx.green { background: #1a8f1a; border-color: #5fc763; }
.fx.yellow { background: #efc01d; border-color: #cfcf8a; }
.playhead {
  position: absolute;
  top: 0;
  bottom: 0;
  left: 236px;
  width: 1px;
  background: #3d8ed4;
}
.vscrolls {
  display: flex;
  flex-direction: column;
  padding: 60px 0 0 1px;
}
.vscroll {
  flex: 1;
  display: flex;
  flex-direction: column;
  justify-content: space-between;
  width: 11px;
  padding: 3px 0 1px;
  background: var(--line);
}
.vscroll.video {
  flex: none;
  height: 146px;
  padding: 5px 0 4px;
}
.timeline-hscroll {
  display: flex;
  justify-content: space-between;
  align-items: center;
  width: 512px;
  height: 12px;
  margin: 0 0 11px 12px;
  background: var(--line);
}

/* tools */
.tools {
  align-items: center;
  padding: 15px 14px 0 0;
}
.tool {
  position: relative;
  width: 27px;
  height: 27px;
}
.tool.active {
  border: 1px solid var(--line);
  border-radius: 2px;
  background: #151515;
}
.more-tools::after {
  content: "";
  position: absolute;
  right: 1px;
  bottom: 1px;
  width: 3px;
  height: 3px;
  background: #8a8a8a;
  clip-path: polygon(100% 0, 100% 100%, 0 100%);
}
.type-tool {
  color: var(--icon);
  font: 700 18px/20px "Liberation Serif", serif;
}

/* audio meters */
.meters {
  padding: 26px 0 11px 12px;
}
.meter-row {
  flex: 1;
  min-height: 0;
  display: flex;
}
.meter {
  display: flex;
  flex-direction: column;
  width: 55px;
  border: 1px solid #000;
  background: var(--dark);
}
.clip-lights,
.bars {
  display: grid;
  grid-template-columns: 1fr 1fr;
  border-bottom: 1px solid #000;
}
.clip-lights {
  height: 9px;
}
.clip-lights i:first-child {
  border-right: 1px solid #000;
}
.bars {
  flex: 1;
  gap: 1px;
}
.bars i {
  border-bottom: 1px solid #e8dc3a;
}
.meter-scale {
  position: relative;
  flex: 1;
  margin: 11px 0 2px 1px;
}
.meter-scale .db-tick {
  position: absolute;
  left: 0;
  width: 2px;
  height: 1px;
  background: #8a8a8a;
}
.meter-scale .db-tick.major {
  width: 4px;
}
.db-label {
  position: absolute;
  left: 6px;
  margin-top: -7px;
  font-size: 10px;
}
.db-label.unit {
  margin-top: -10px;
}
.solo {
  display: flex;
  gap: 9px;
  padding: 3px 0 1px 5px;
}
.solo button {
  width: 18px;
  height: 18px;
  border: 1px solid #363636;
  border-radius: 2px;
  font-size: 9px;
}

/* status bar */
.status {
  display: flex;
  align-items: center;
  height: 20px;
  padding: 0 25px 0 2px;
  background: var(--bg);
}
.status-text {
  margin-left: 39px;
}
.status-end {
  align-self: stretch;
  margin-left: auto;
  border-left: 2px solid #303030;
}
```
FILE: app.js
```js
// project bin
const items = [
  ['orange', 'folder', 'Premiere Composer Files', '', '', ''],
  ['green', 'sequence', 'SEO', '23.976 fps', '00:00:00:00', '00:10'],
  ['green', 'sequence', 'Sequence 01', '23.976 fps', '00:00:00:00', '00:10'],
  ['green', 'sequence', 'Nested Sequence 01', '25.00 fps', '00:00:00:00', '00:11'],
  ['green', 'sequence', 'SEO', '25.00 fps', '00:00:00:00', '00:10'],
];
['01', '02', '04', '06', '08', '10', '12', '13', '14', '15', '16', '17'].forEach(n => {
  items.push(['pink', 'comp', `SEO Linked Comp ${n}/seo.ae`, '25.00 fps', '00:00:00:00', '00:00']);
});
const iconSize = { folder: [14, 12], sequence: [15, 15], comp: [17, 15] };

document.getElementById('binRows').innerHTML = items.map(([color, icon, name, rate, start, end], i) => {
  const [w, h] = iconSize[icon];
  const twirl = icon === 'folder'
    ? '<svg class="twirl" width="5" height="9"><path d="M0 0l4 4.500L0 9" fill="none" stroke="#b5b5b5"/></svg>'
    : '<i></i>';
  return `<tr${i === 1 ? ' class="selected"' : ''}>
    <td><i class="swatch ${color}"></i></td>
    <td><div class="item-name">${twirl}<svg width="${w}" height="${h}" color="#b5b5b5"><use href="#i-${icon}"/></svg>${name}</div></td>
    <td>${rate}</td><td>${start}</td><td>${end}</td></tr>`;
}).join('');

// rulers: positions are in timeline units, turned into a share of the visible range
function ticks(count, step, offset, total, every) {
  let html = '';
  for (let k = 1; k <= count; k++) {
    html += `<i class="tick${k % every === 0 ? ' major' : ''}" style="left:${(offset + k * step) / total * 100}%"></i>`;
  }
  return html;
}
const marks = (list, total) => list.map(x => `<i class="mark" style="left:${x / total * 100}%"></i>`).join('');

document.getElementById('programRuler').innerHTML =
  ticks(131, 8.43, -2, 1108, 12) + marks([51, 241, 380, 637, 925, 1009], 1108) +
  '<i class="head-grip"></i><i class="grip"></i>';

const RULER = 1481;
let ruler = ticks(175, 8.458, -1, RULER, 15);
for (let n = 0; n < 12; n++) {
  const s = n * 15;
  const label = `00:0${Math.floor(s / 60)}:${String(s % 60).padStart(2, '0')}:00`;
  ruler += `<span class="ruler-label" style="left:${n * 126.87 / RULER * 100}%">${label}</span>`;
}
ruler += marks([265, 1221], RULER);
ruler += `<i class="hover-line" style="left:${185 / RULER * 100}%"></i><i class="head-grip"></i>`;
document.getElementById('ruler').innerHTML = ruler;

// clips
const SPAN = 1484;
const place = (from, to) => `style="left:${from / SPAN * 100}%;width:${(to - from) / SPAN * 100}%"`;
const fx = color => color ? `<i class="fx ${color}">fx</i>` : '';

// [end, kind, fx, name], each clip starts where the last one ends
const v1 = [
  [24, 'comp'], [50, 'nest'], [74, 'nest'], [123, 'comp', 'gray', 'SEO'], [149, 'nest'],
  [180, 'nest', 'green'], [215, 'comp', 'gray'], [270, 'nest', 'yellow', 'Nest'], [310, 'comp', 'gray'],
  [439, 'nest', 'green', 'Nested Sequence 01'], [461, 'comp'], [485, 'nest'], [510, 'nest'], [528, 'nest'],
  [552, 'comp'], [580, 'nest'], [614, 'nest', 'yellow'], [648, 'comp', 'gray'],
  [719, 'nest', 'yellow', 'Nested S'], [755, 'comp', 'gray'], [803, 'nest', 'yellow', 'Nes'], [820, 'comp'],
  [860, 'nest', 'yellow'], [985, 'nest', 'green', 'Nested Sequence 01 ['], [1042, 'nest', 'yellow', 'Neste'],
  [1101, 'comp', 'gray', 'SEO Li'], [1221, 'nest', 'green', 'Nested Sequence 01'],
  [1314, 'nest', 'yellow', 'Nested Seque'], [1408, 'comp', 'gray', 'SEO Linked Co'],
  [1484, 'nest', 'green', 'Nested Se'],
];
const a1 = [
  [24], [50], [99, 'gray'], [123], [149], [215, 'gray'], [270, 'gray'], [292], [439, 'gray'], [461], [485],
  [510], [580, 'gray'], [614, 'gray'], [629], [648], [719, 'gray'], [744], [803, 'gray'], [820], [860, 'gray'],
  [985, 'gray'], [1042, 'gray'], [1055], [1101, 'gray'], [1221, 'gray'], [1484, 'gray'],
];
const titles = [143, 175, 210, 265, 304, 434, 456, 609, 642, 797, 814, 1050, 1096, 1215, 1313, 1371];

function chain(list, render) {
  let from = 0;
  return list.map(c => {
    const html = render(from, c);
    from = c[0];
    return html;
  }).join('');
}
const wave = '<svg viewBox="0 0 11 15" preserveAspectRatio="none"><path class="wave" d="M0 8V7l2-1 3-3 3 3 3 1v1zM2 15l3-3q1-1 2 0l3 3z"/></svg>';
const sounds = (list, kind) => list.map(([x, w = 11]) =>
  `<i class="clip ${kind}" ${place(x, x + Math.abs(w))}>${w > 0 ? wave : ''}</i>`).join('');

const lanes = {
  V2: `<i class="clip linked" ${place(31, 50)}></i>` +
    titles.map(x => `<i class="clip title" ${place(x, x + 10)}></i>`).join(''),
  V1: chain(v1, (from, [to, kind, color, name]) =>
    `<div class="clip ${kind}" ${place(from, to)}>${fx(color)}${name ? `<span class="clip-name">${name}</span>` : ''}</div>`),
  A1: chain(a1, (from, [to, color]) => `<div class="clip nest-audio" ${place(from, to)}>${fx(color)}</div>`),
  A2: titles.map(x => `<i class="clip title-audio" ${place(x, x + 9)}></i>`).join('') +
    sounds([[58], [75, 10], [86], [295, -7], [444, -11], [536, 10], [626]], 'sfx'),
  A3: [12, 15, 18].map(x => `<i class="clip sliver" ${place(x, x + 1)}></i>`).join('') +
    sounds([[0, 9], [31, -10], [99], [146, 10], [196], [271], [290], [342], [440, 10], [528], [611],
      [723, -11], [808, -10], [854], [1316, -8], [1335, 10], [1365]], 'sfx'),
  A5: sounds([[5, -7], [15], [716], [800], [1050], [1070, 10], [1082], [1143], [1311, 10], [1324, 10],
    [1344], [1360, 9]], 'sfx-dark'),
  A6: `<div class="clip music" ${place(1214, 1484)}>${fx('yellow')}</div>`,
  A7: `<div class="clip music" ${place(0, 269)}>${fx('yellow')}</div><div class="clip music" ${place(269, 1217)}>${fx('yellow')}</div>`,
};
const icon = (id, w, h) => `<svg width="${w}" height="${h}"><use href="#i-${id}"/></svg>`;

function track(name) {
  const video = name[0] === 'V';
  const source = name === 'V1' || name === 'A1';
  const target = source || name === 'A2' || name === 'A3';
  const tail = video
    ? `<button aria-label="Toggle output">${icon('eye', 13, 10)}</button>`
    : `<button>M</button><button>S</button><button aria-label="Voice-over">${icon('mic', 9, 13)}</button>`;
  return `<div class="track${video ? ' video' : ''}${name === 'A1' ? ' first-audio' : ''}">
    <div class="track-head">
      ${source ? `<button class="patch on">${name}</button>` : '<i></i>'}
      <button aria-label="Lock">${icon('lock', 9, 10)}</button>
      <button class="patch${target ? ' on' : ''}">${name}</button>
      <button aria-label="Sync lock">${icon('sync', 13, 10)}</button>
      ${tail}
    </div>
    <div class="lane${!video && target ? ' targeted' : ''}">${lanes[name] || ''}</div>
  </div>`;
}
document.getElementById('tracks').innerHTML =
  ['V5', 'V4', 'V3', 'V2', 'V1', 'A1', 'A2', 'A3', 'A4', 'A5', 'A6', 'A7'].map(track).join('') +
  `<div class="track"><div class="track-head"><i></i><button aria-label="Lock">${icon('lock', 9, 10)}</button>
    <span class="mix-name">Mix</span><span class="mix-value">0.2</span><span class="mix-keys">${icon('keys', 12, 10)}</span></div></div>`;

// audio meter scale
let scale = '';
for (let db = 0; db <= 60; db++) {
  const top = db / 60 * 100;
  scale += `<i class="db-tick${db % 6 === 0 ? ' major' : ''}" style="top:${top}%"></i>`;
  if (db % 6 === 0) {
    const unit = db === 60;
    scale += `<span class="db-label${unit ? ' unit' : ''}" style="top:${top}%">${unit ? 'dB' : db ? -db : 0}</span>`;
  }
}
document.getElementById('meterScale').innerHTML = scale;
```
